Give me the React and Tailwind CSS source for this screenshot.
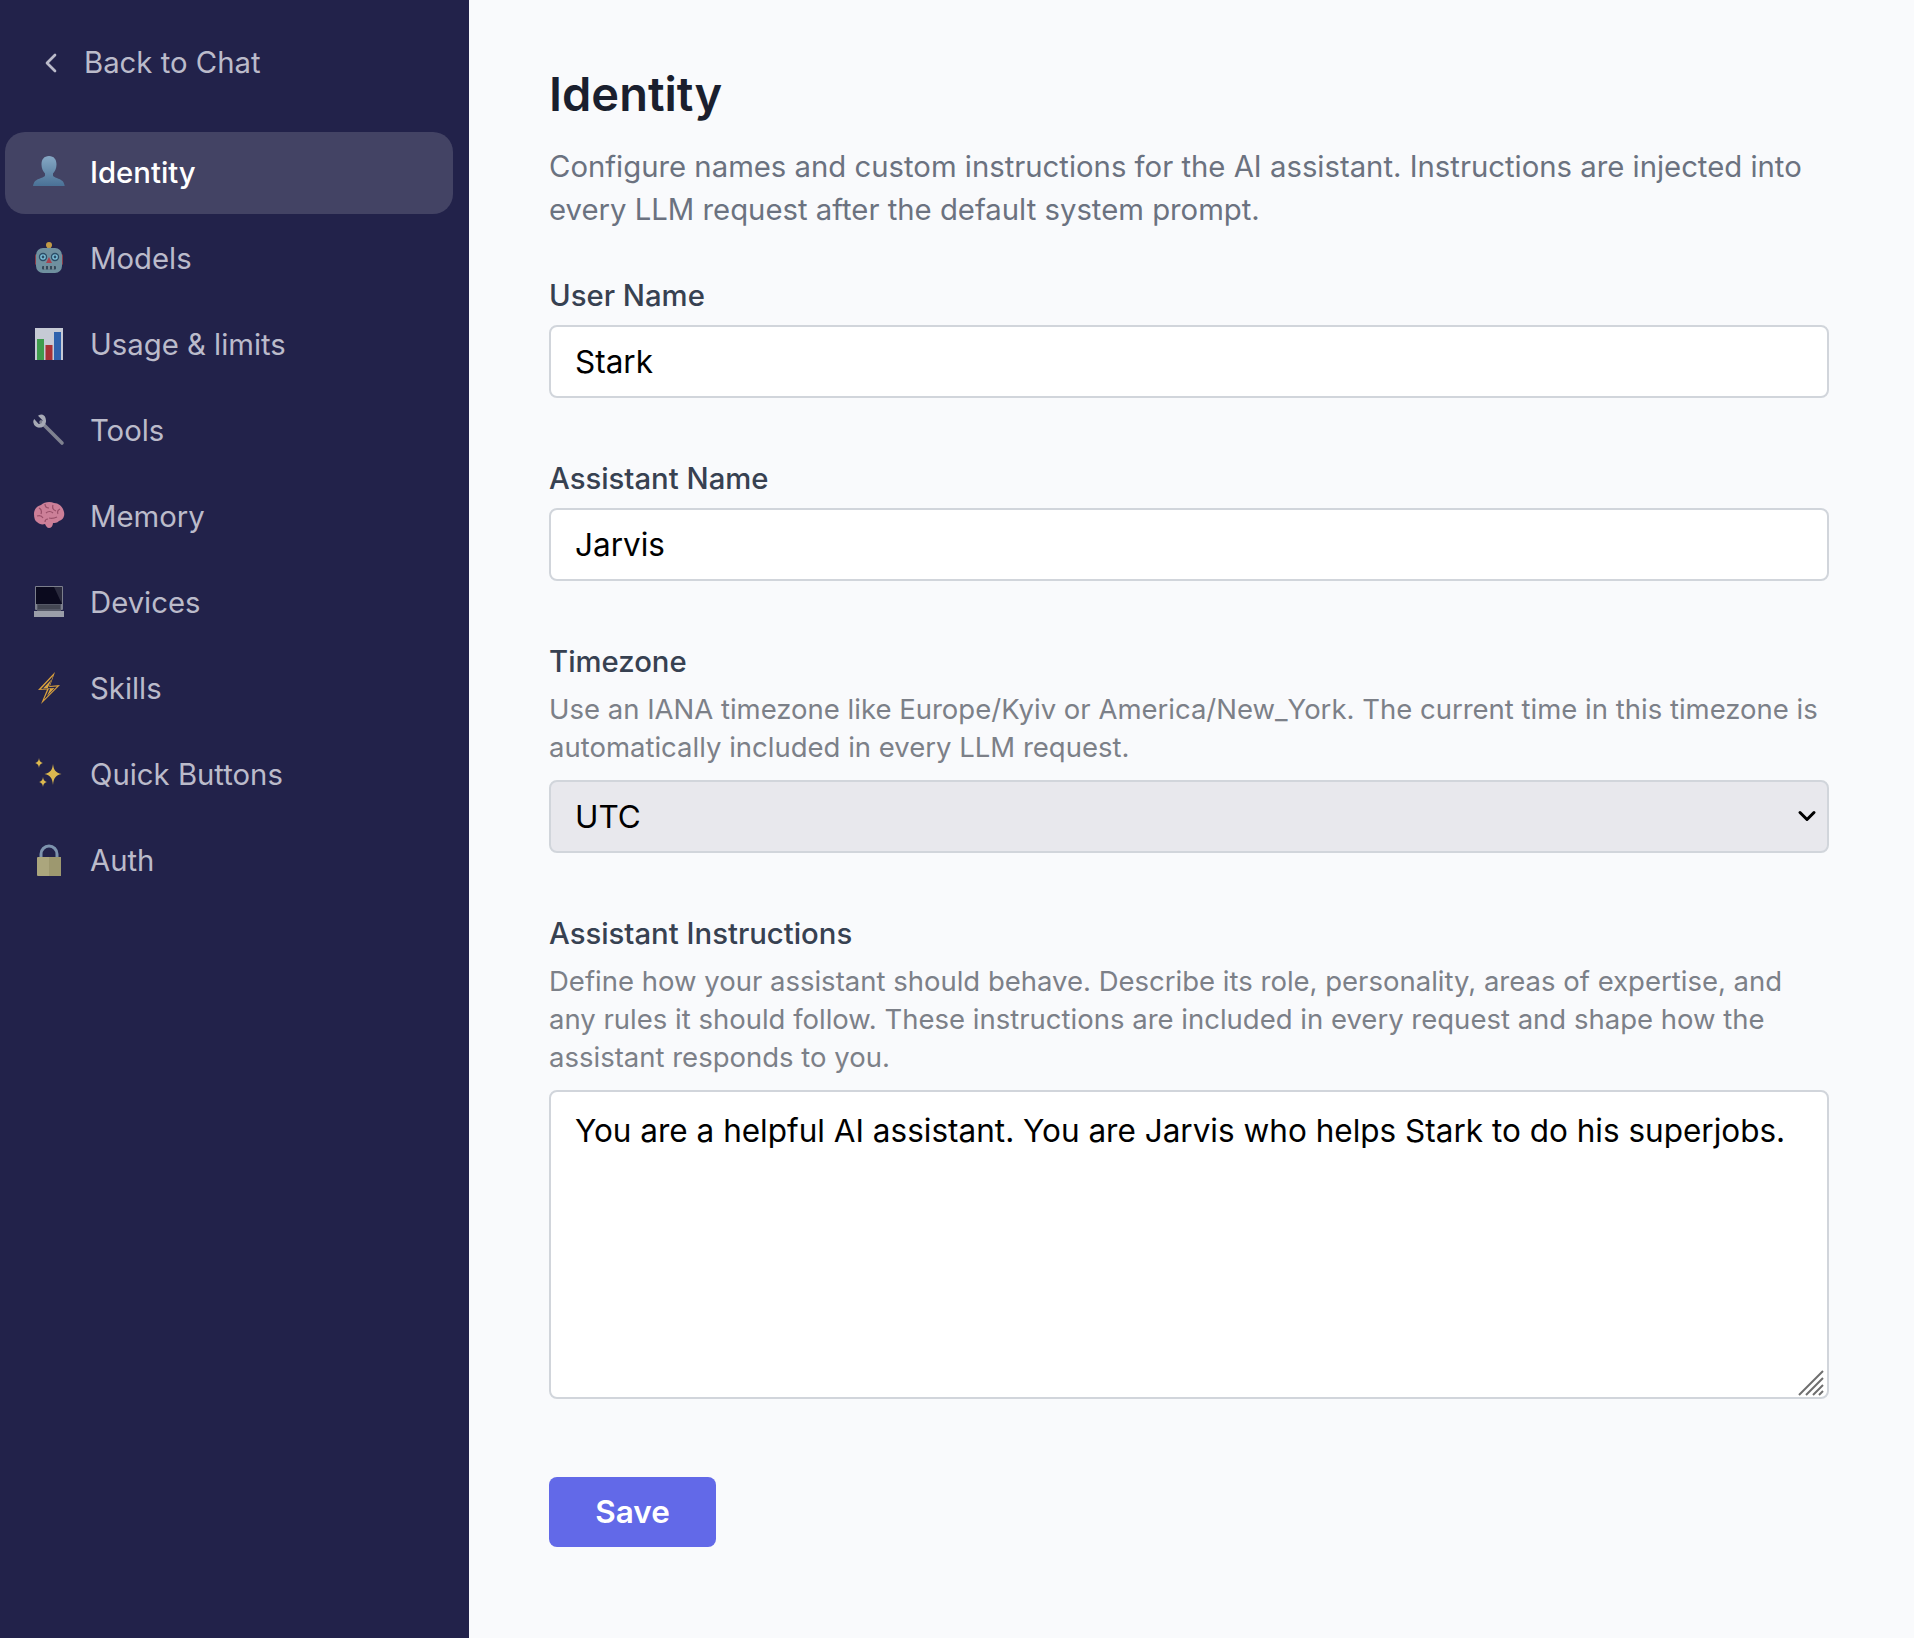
import { ChevronLeft, ChevronDown } from "lucide-react";

function PersonIcon() {
  return (
    <svg viewBox="0 0 32 32" className="h-8 w-8">
      <defs>
        <linearGradient id="person" x1="0" y1="0" x2="0" y2="1">
          <stop offset="0" stopColor="#86a8c4" />
          <stop offset="1" stopColor="#4a7196" />
        </linearGradient>
      </defs>
      <path
        fill="url(#person)"
        d="M16 0c5 0 7.500 3.500 7.500 8.500 0 3.800-1.600 7-3.500 9v2c0 2 7 3 9.500 5.500 1.200 1.200 2 3.500 2.200 5H0c.2-1.500 1-3.800 2.200-5 2.500-2.500 9.800-3.500 9.800-5.500v-2c-1.900-2-3.500-5.200-3.500-9C8.500 3.500 11 0 16 0z"
      />
    </svg>
  );
}

function RobotIcon() {
  return (
    <svg viewBox="0 0 32 32" className="h-8 w-8">
      <rect x="14" y="3" width="4" height="4" fill="#8a8466" />
      <circle cx="16" cy="3" r="3" fill="#c29a45" />
      <rect x="2" y="12" width="4" height="11" rx="1.500" fill="#8a3b47" />
      <rect x="26" y="12" width="4" height="11" rx="1.500" fill="#8a3b47" />
      <rect x="3" y="6" width="26" height="25" rx="7" fill="#6f909f" />
      <circle cx="10" cy="15" r="4.200" fill="#2c4d66" />
      <circle cx="22" cy="15" r="4.200" fill="#2c4d66" />
      <circle cx="10" cy="15" r="2.800" fill="#7fc3dc" />
      <circle cx="22" cy="15" r="2.800" fill="#7fc3dc" />
      <circle cx="10" cy="15" r="1.400" fill="#2c4d66" />
      <circle cx="22" cy="15" r="1.400" fill="#2c4d66" />
      <path d="M16 15l3 6h-6z" fill="#a8424f" />
      <rect x="9" y="24" width="14" height="3.500" rx="1" fill="#33495a" />
      <path d="M12 24v3.500M16 24v3.500M20 24v3.500" stroke="#a5b6bf" strokeWidth="1.200" />
    </svg>
  );
}

function ChartIcon() {
  return (
    <svg viewBox="0 0 32 32" className="h-8 w-8">
      <rect x="2" y="0" width="28" height="32" fill="#c6cad5" />
      <rect x="4" y="11" width="7" height="21" fill="#3f9c4d" />
      <rect x="12.500" y="17" width="7" height="15" fill="#a83236" />
      <rect x="21" y="4" width="7" height="28" fill="#2f62ad" />
    </svg>
  );
}

function WrenchIcon() {
  return (
    <svg viewBox="0 0 32 32" className="h-8 w-8">
      <path d="M8 8l21 21" stroke="#7f8290" strokeWidth="3.600" strokeLinecap="round" />
      <path d="M9 0.500c-1.500 0-2.800.4-4 1.200l4.500 4.500-.8 3-3 .8L1.200 5C.4 6.200 0 7.500.5 9c.6 3 3.400 5 6.500 4.600 3.600-.4 6.300-3.600 6-7.200C12.700 3 11.300 1 9 .5z" fill="#a7aab5" />
    </svg>
  );
}

function BrainIcon() {
  return (
    <svg viewBox="0 0 32 32" className="h-8 w-8">
      <path
        fill="#cc7f98"
        d="M1 14c0-5 3-8 7-9 3-3 9-4 13-2 5 0 9 4 10 9 1 4-1 8-5 9-2 2-4 2-6 2 0 3-2 5-4 5s-3-2-4-4c-3 1-6 0-8-2-2-1-3-4-3-8z"
      />
      <path
        fill="none"
        stroke="#984f69"
        strokeWidth="1.200"
        d="M6 8c2 1 3 3 2 6M12 4c0 3 2 4 4 4M20 5c-1 3 0 5 3 6M27 9c-2 1-3 3-2 5M4 16c3-1 5 0 6 2M13 13c2-2 5-2 7 0M16 18c3 1 6 0 8-1M12 22c0-2 1-3 3-3"
      />
    </svg>
  );
}

function LaptopIcon() {
  return (
    <svg viewBox="0 0 32 32" className="h-8 w-8">
      <rect x="2" y="0" width="28" height="24" rx="1" fill="#7c7f8c" />
      <rect x="3" y="1" width="26" height="17" fill="#0b0a1e" />
      <path d="M21 1h8v17z" fill="#2a2a3d" />
      <rect x="4" y="18" width="24" height="7" fill="#555866" />
      <path d="M1 25h30v6H1z" fill="#9b9ea9" />
      <path d="M5 20h22M5 22h22" stroke="#33353f" strokeWidth="1" />
    </svg>
  );
}

function BoltIcon() {
  return (
    <svg viewBox="0 0 32 32" className="h-8 w-8">
      <path d="M22 0L5 18l9-.5L8 32l19-19-10 1z" fill="#dba13c" />
      <path d="M20 4L8 17l8-.5-5 11 13-13-8 .6z" fill="#23234a" />
      <path d="M18.500 7.500L10 16.500l7.500-.5-3.500 8 7.500-8-7 .5z" fill="#d9a441" />
    </svg>
  );
}

function SparkleIcon() {
  return (
    <svg viewBox="0 0 32 32" className="h-8 w-8" fill="#dcb84f">
      <path d="M20 6c.7 6 2.500 8.500 8.500 10-6 1.500-7.800 4-8.500 11-.7-7-2.500-9.500-8.500-11 6-1.500 7.800-4 8.500-10z" />
      <path d="M6 0c.4 3 1.200 4.200 3.800 5C7.200 5.800 6.400 7 6 10c-.4-3-1.200-4.200-3.800-5C4.800 4.200 5.600 3 6 0z" />
      <path d="M10 19c.4 3 1.200 4.200 3.800 5-2.600.8-3.400 2-3.800 5-.4-3-1.200-4.200-3.800-5 2.600-.8 3.400-2 3.800-5z" />
    </svg>
  );
}

function LockIcon() {
  return (
    <svg viewBox="0 0 32 32" className="h-8 w-8">
      <path d="M8 16V10a8 8 0 0116 0v6" fill="none" stroke="#7d93ad" strokeWidth="3" />
      <rect x="4" y="13" width="24" height="19" rx="1" fill="#aba67d" />
      <rect x="16" y="13" width="12" height="19" fill="#9d986f" />
    </svg>
  );
}

const navItems = [
  { label: "Identity", Icon: PersonIcon, active: true },
  { label: "Models", Icon: RobotIcon },
  { label: "Usage & limits", Icon: ChartIcon },
  { label: "Tools", Icon: WrenchIcon },
  { label: "Memory", Icon: BrainIcon },
  { label: "Devices", Icon: LaptopIcon },
  { label: "Skills", Icon: BoltIcon },
  { label: "Quick Buttons", Icon: SparkleIcon },
  { label: "Auth", Icon: LockIcon },
];

function NavItem({ label, Icon, active }) {
  return (
    <div
      className={`flex h-[82px] items-center gap-[25px] rounded-[20px] pl-7 text-[29.3px] ${
        active ? "bg-[#434364] font-medium text-white" : "text-[#bbbbca]"
      }`}
    >
      <span className="-mt-[3px]">
        <Icon />
      </span>
      {label}
    </div>
  );
}

function Sidebar() {
  return (
    <aside className="w-[469px] shrink-0 bg-[#22224a] pr-4 pl-[5px]">
      <div className="flex h-[126px] items-center gap-[17px] pb-0 pl-[30px] text-[29.3px] text-[#bbbbca]">
        <ChevronLeft className="h-8 w-8" strokeWidth={2} />
        Back to Chat
      </div>
      <nav className="mt-[6px] flex flex-col gap-1">
        {navItems.map((item) => (
          <NavItem key={item.label} {...item} />
        ))}
      </nav>
    </aside>
  );
}

const inputClass =
  "block h-[73px] w-full rounded-lg border-2 border-[#d1d5db] px-6 text-[31.500px] text-black outline-none";

export default function App() {
  return (
    <div className="flex h-[1638px] bg-[#f9fafc] font-['Inter',sans-serif]">
      <Sidebar />
      <main className="w-[1360px] pt-[62px] pl-20">
        <h1 className="text-[47px] leading-[64px] font-semibold text-[#1a1f2e]">Identity</h1>
        <p className="mt-[19px] text-[29.3px] leading-[43px] text-[#6b7280]">
          Configure names and custom instructions for the AI assistant. Instructions are injected into every LLM request after the default system prompt.
        </p>

        <label className="mt-[43px] block text-[29.3px] leading-[43px] font-medium text-[#374151]">User Name</label>
        <input className={`${inputClass} mt-[8px] bg-white`} defaultValue="Stark" />

        <label className="mt-[59px] block text-[29.3px] leading-[43px] font-medium text-[#374151]">Assistant Name</label>
        <input className={`${inputClass} mt-[8px] bg-white`} defaultValue="Jarvis" />

        <label className="mt-[59px] block text-[29.3px] leading-[43px] font-medium text-[#374151]">Timezone</label>
        <p className="mt-[7px] text-[27.500px] leading-[38px] text-[#7c8088]">
          Use an IANA timezone like Europe/Kyiv or America/New_York. The current time in this timezone is automatically included in every LLM request.
        </p>
        <div className="relative mt-[14px]">
          <select className={`${inputClass} appearance-none bg-[#e8e8ed]`} defaultValue="UTC">
            <option>UTC</option>
          </select>
          <ChevronDown className="absolute top-[22px] right-[8px] h-[28px] w-[28px] text-black" strokeWidth={2.600} />
        </div>

        <label className="mt-[59px] block text-[29.3px] leading-[43px] font-medium text-[#374151]">Assistant Instructions</label>
        <p className="mt-[7px] text-[27.500px] leading-[38px] text-[#7c8088]">
          Define how your assistant should behave. Describe its role, personality, areas of expertise, and any rules it should follow. These instructions are included in every request and shape how the assistant responds to you.
        </p>
        <div className="relative mt-[14px]">
          <textarea
            className="block h-[309px] w-full resize-none rounded-lg border-2 border-[#d1d5db] bg-white px-6 py-[19px] text-[31.500px] leading-[40px] text-black outline-none"
            defaultValue="You are a helpful AI assistant. You are Jarvis who helps Stark to do his superjobs."
          />
          <svg viewBox="0 0 28 26" className="absolute right-[3px] bottom-[3px] h-[26px] w-[28px]">
            <path d="M1 25L25 1M8 25L25 8M15 25L25 15M21 25l4-4" stroke="#6f6f6f" strokeWidth="2" fill="none" />
          </svg>
        </div>

        <button className="mt-[78px] block h-[70px] w-[167px] rounded-lg bg-[#6269e8] text-[31.500px] font-semibold text-white">
          Save
        </button>
      </main>
    </div>
  );
}
